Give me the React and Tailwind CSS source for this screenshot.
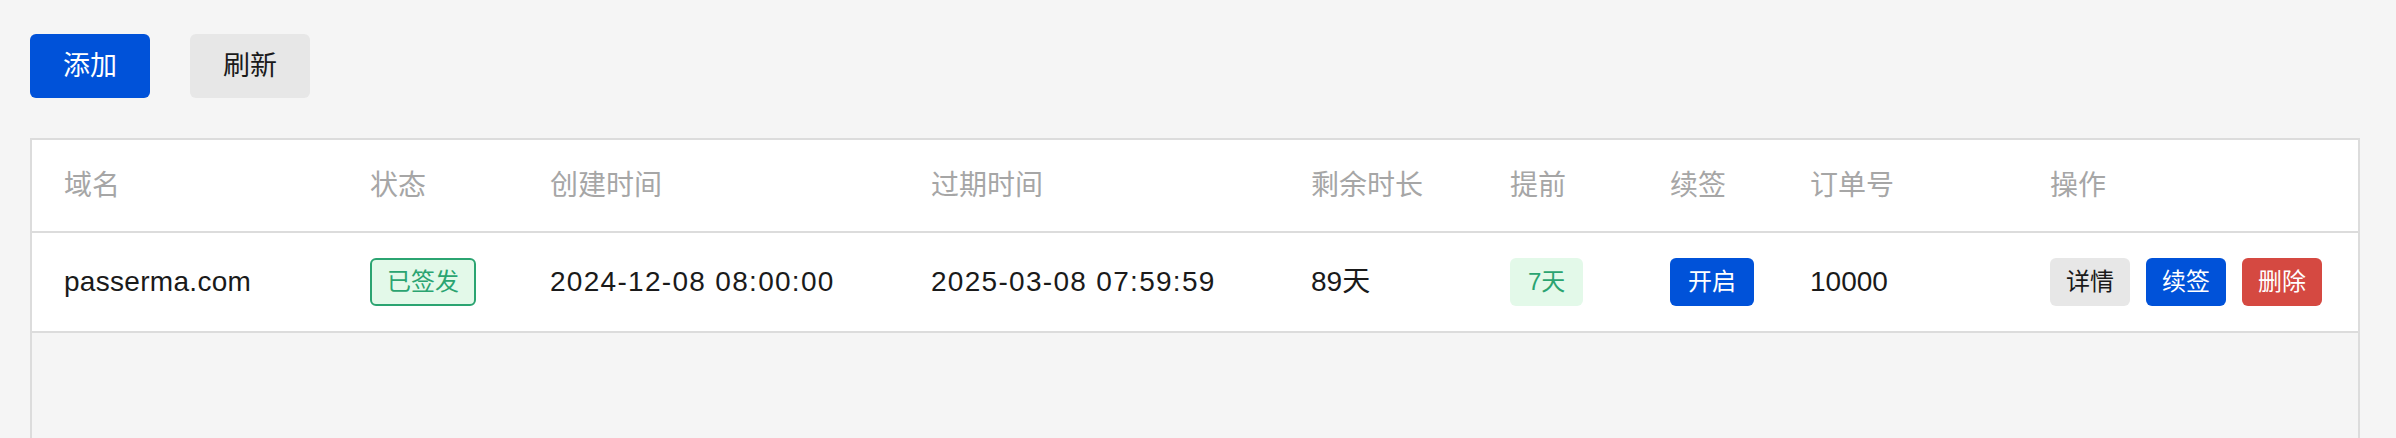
import React from 'react'

const cols = "grid grid-cols-[306px_180px_381px_380px_199px_160px_140px_240px_1fr]"

const headers = ["域名", "状态", "创建时间", "过期时间", "剩余时长", "提前", "续签", "订单号", "操作"]

const rows = [
    {
        domain: "passerma.com",
        created: "2024-12-08 08:00:00",
        expires: "2025-03-08 07:59:59",
        left: "89天",
        ahead: "7天",
        order: "10000",
    },
]

export default function App() {
    return (
        <div className="h-screen overflow-hidden bg-[#f5f5f5] pl-[30px] pr-[36px] pt-[34px] font-['Liberation_Sans','Noto_Sans_CJK_SC',sans-serif]">

            {/* Toolbar */}
            <div className="flex gap-[40px]">
                <button className="w-[120px] h-[64px] rounded-[6px] bg-[#0052d9] text-white text-[27px]">添加</button>
                <button className="w-[120px] h-[64px] rounded-[6px] bg-[#e7e7e7] text-[#1a1a1a] text-[27px]">刷新</button>
            </div>

            {/* Table */}
            <div className="mt-[40px] h-[300px] border-2 border-b-0 border-[#dcdcdc]">

                <div className={`${cols} h-[93px] bg-white border-b-2 border-[#dcdcdc]`}>
                    {headers.map(h => (
                        <div key={h} className="flex items-center px-[32px] text-[28px] text-[#a6a6a6] whitespace-nowrap">{h}</div>
                    ))}
                </div>

                {rows.map(r => (
                    <div key={r.domain} className={`${cols} h-[100px] bg-white border-b-2 border-[#dcdcdc] text-[28px] text-[#1a1a1a] whitespace-nowrap`}>
                        <div className="flex items-center px-[32px] tracking-[0.3px]">{r.domain}</div>
                        <div className="flex items-center px-[32px]">
                            <span className="flex items-center shrink-0 h-[48px] px-[15px] rounded-[6px] border-2 border-[#2ba471] bg-[#e3f9e9] text-[#2ba471] text-[24px]">已签发</span>
                        </div>
                        <div className="flex items-center px-[32px] tracking-[1.3px]">{r.created}</div>
                        <div className="flex items-center px-[32px] tracking-[1.3px]">{r.expires}</div>
                        <div className="flex items-center px-[32px]">{r.left}</div>
                        <div className="flex items-center px-[32px]">
                            <span className="flex items-center shrink-0 h-[48px] px-[18px] rounded-[6px] bg-[#e3f9e9] text-[#2ba471] text-[24px]">{r.ahead}</span>
                        </div>
                        <div className="flex items-center px-[32px]">
                            <button className="shrink-0 h-[48px] px-[18px] rounded-[6px] bg-[#0052d9] text-white text-[24px] whitespace-nowrap">开启</button>
                        </div>
                        <div className="flex items-center px-[32px]">{r.order}</div>
                        <div className="flex items-center gap-[16px] px-[32px]">
                            <button className="shrink-0 w-[80px] h-[48px] rounded-[6px] bg-[#e7e7e7] text-[#1a1a1a] text-[24px]">详情</button>
                            <button className="shrink-0 w-[80px] h-[48px] rounded-[6px] bg-[#0052d9] text-white text-[24px]">续签</button>
                            <button className="shrink-0 w-[80px] h-[48px] rounded-[6px] bg-[#d54941] text-white text-[24px]">删除</button>
                        </div>
                    </div>
                ))}
            </div>
        </div>
    )
}
